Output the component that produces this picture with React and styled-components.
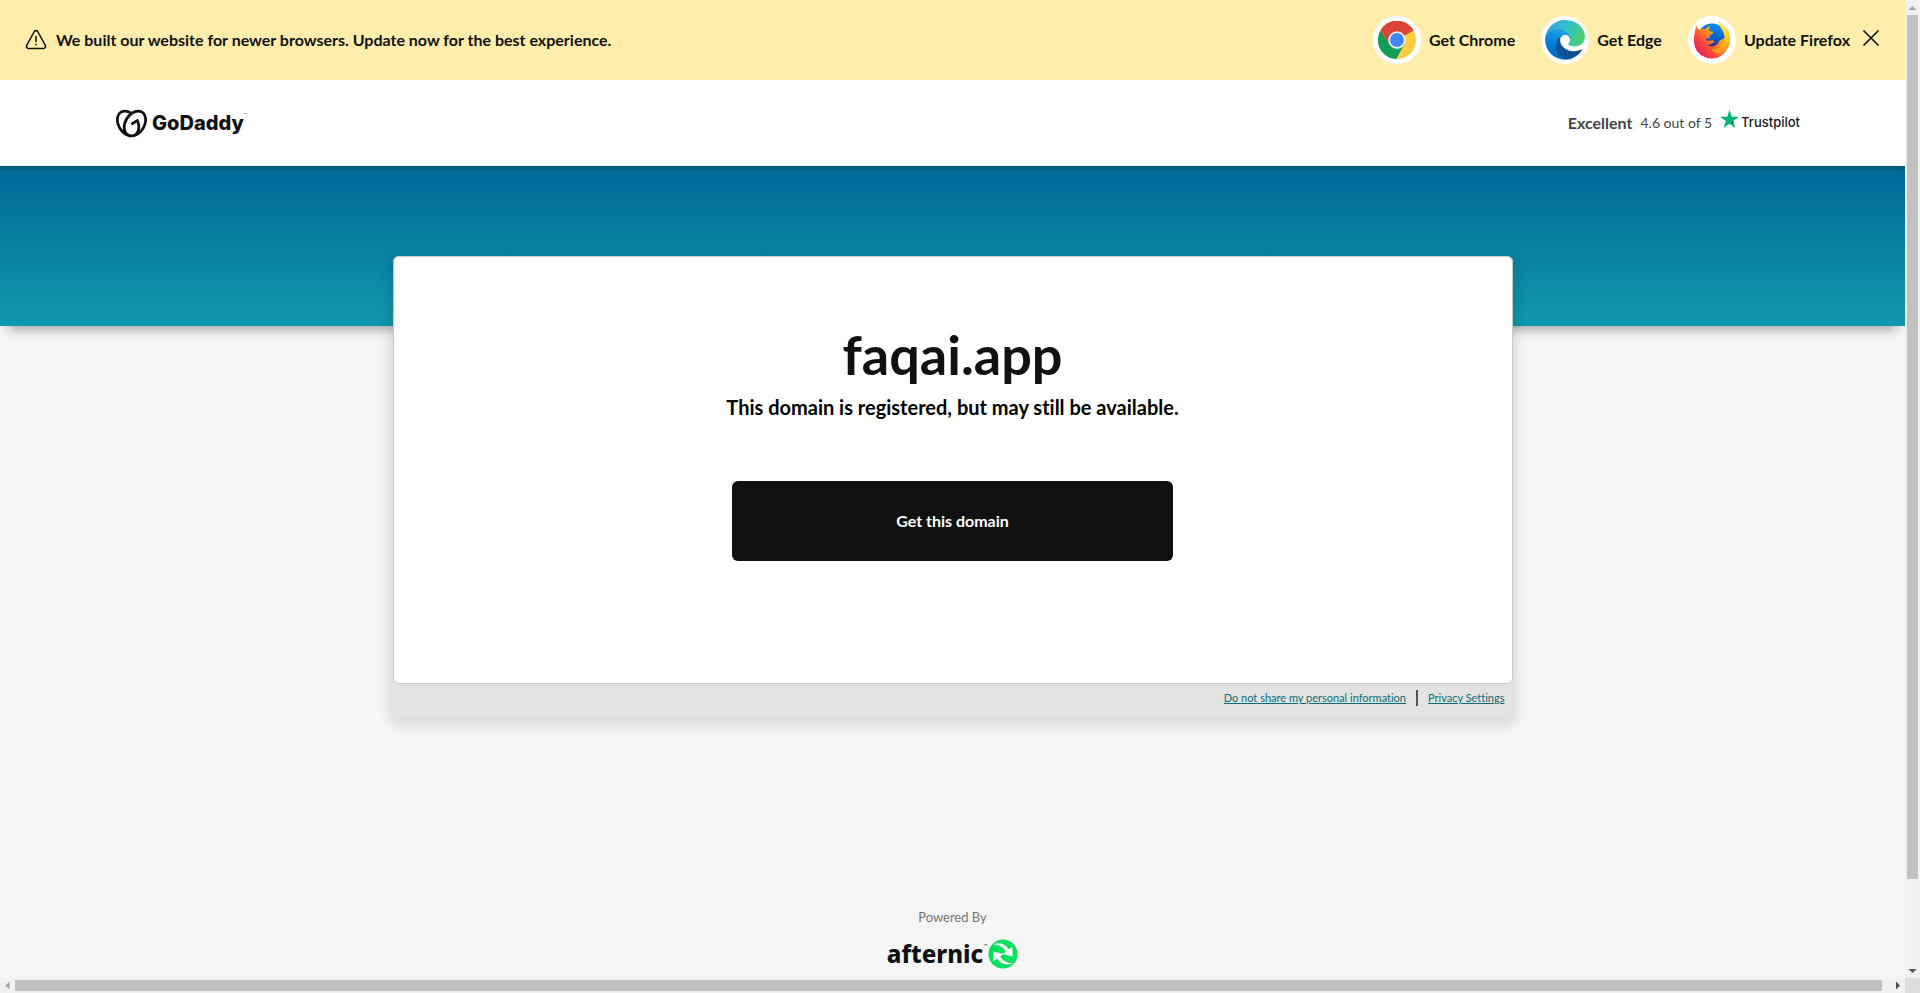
import React, { useState } from 'react';
import styled, { createGlobalStyle } from 'styled-components';
import { SiGodaddy } from 'react-icons/si';

const GlobalStyle = createGlobalStyle`
    * {
        box-sizing: border-box;
    }
    body {
        margin: 0;
        background: #f5f5f5;
        color: #111111;
        font-family: Lato, "Liberation Sans", sans-serif;
        font-size: 16px;
        font-variant-ligatures: none;
        line-height: 24px;
        overflow: hidden;
    }
`;

const Frame = styled.div`
    display: grid;
    grid-template-columns: minmax(0, 1fr) 15px;
    grid-template-rows: minmax(0, 1fr) 15px;
    height: 100vh;
`;

const Page = styled.div`
    display: flex;
    flex-direction: column;
    overflow: hidden;
`;

const Banner = styled.section`
    display: flex;
    flex: none;
    align-items: center;
    justify-content: space-between;
    height: 80px;
    padding: 0 25px 0 24px;
    background: #feedab;
    font-weight: 700;
    font-size: 16px;
`;

const BannerMessage = styled.p`
    display: flex;
    align-items: center;
    gap: 8px;
    margin: 0;
`;

const BrowserList = styled.div`
    display: flex;
    align-items: center;
    gap: 26px;
`;

const BrowserLink = styled.a`
    display: flex;
    align-items: center;
    gap: 8px;
    color: inherit;
    text-decoration: none;
    white-space: nowrap;
`;

const BrowserIcon = styled.span`
    display: flex;
    align-items: center;
    justify-content: center;
    width: 48px;
    height: 48px;
    border-radius: 50%;
    background: #ffffff;
`;

const BannerActions = styled.div`
    display: flex;
    align-items: center;
    gap: 12px;
`;

const CloseButton = styled.button`
    display: flex;
    padding: 0 0 5px;
    border: 0;
    background: none;
    color: inherit;
    cursor: pointer;
`;

const Header = styled.header`
    display: flex;
    flex: none;
    align-items: center;
    justify-content: space-between;
    height: 86px;
    padding: 0 105px 0 116px;
    background: #ffffff;
`;

const Brand = styled.a`
    display: flex;
    align-items: center;
    color: #111111;
    font-family: Inter, sans-serif;
    font-size: 20px;
    font-weight: 800;
    text-decoration: none;
`;

const BrandName = styled.span`
    margin-left: 5px;
`;

const TradeMark = styled.span`
    align-self: flex-start;
    padding-top: 4px;
    font-size: 4px;
    font-weight: 400;
    line-height: 6px;
`;

const Rating = styled.a`
    display: flex;
    align-items: center;
    gap: 8px;
    color: #444444;
    font-size: 14px;
    text-decoration: none;
`;

const RatingWord = styled.strong`
    font-size: 16px;
    font-weight: 700;
`;

const Trustpilot = styled.span`
    display: flex;
    align-items: flex-start;
    gap: 2px;
    padding-bottom: 2px;
    color: #191919;
    font-family: Inter, "Liberation Sans", sans-serif;
    font-size: 13px;
    font-weight: 500;
`;

const Hero = styled.div`
    flex: none;
    height: 160px;
    background:
        linear-gradient(rgba(0, 0, 0, 0.2), rgba(0, 0, 0, 0) 6px),
        linear-gradient(#016899, #1098ad);
    box-shadow: 0 10px 12px -8px rgba(0, 0, 0, 0.4);
`;

const Main = styled.main`
    flex: none;
    position: relative;
    width: 100%;
    max-width: 1120px;
    margin: -70px auto 0;
    border-radius: 6px;
    background: #e3e3e3;
    box-shadow: 0 4px 12px 4px rgba(0, 0, 0, 0.1);
`;

const Card = styled.section`
    display: flex;
    flex-direction: column;
    align-items: center;
    padding: 62px 24px 122px;
    border: 1px solid #c8c8c8;
    border-radius: 6px;
    background: #ffffff;
    text-align: center;
`;

const DomainName = styled.h1`
    margin: 0;
    font-size: 54px;
    font-weight: 700;
    line-height: 72px;
`;

const Availability = styled.h2`
    margin: 0 0 58px;
    color: #000000;
    font-size: 20px;
    font-weight: 700;
    line-height: 32px;
`;

const GetDomain = styled.button`
    width: 100%;
    max-width: 441px;
    height: 80px;
    border: 0;
    border-radius: 6px;
    background: #111111;
    color: #ffffff;
    font: inherit;
    font-size: 16px;
    font-weight: 700;
    cursor: pointer;
`;

const Legal = styled.nav`
    display: flex;
    align-items: center;
    justify-content: flex-end;
    height: 34px;
    padding: 0 8px 6px;
`;

const LegalLink = styled.a`
    color: #0a6c74;
    font-size: 11px;
`;

const Divider = styled.span`
    width: 2px;
    height: 16px;
    margin: 0 10px;
    background: #555555;
`;

const Footer = styled.footer`
    display: flex;
    flex: none;
    flex-direction: column;
    align-items: center;
    gap: 10px;
    margin-top: 187px;
    color: #767676;
    font-size: 13px;
`;

const Afternic = styled.a`
    display: flex;
    align-items: center;
    gap: 1px;
    color: #111111;
    font-family: "Noto Sans", sans-serif;
    font-size: 24px;
    font-weight: 800;
    line-height: 30px;
    text-decoration: none;
`;

const ScrollTrack = styled.div`
    display: flex;
    flex-direction: ${({ $vertical }) => ($vertical ? 'column' : 'row')};
    align-items: center;
    background: #f1f1f1;
`;

const ScrollThumb = styled.div`
    flex: ${({ $size }) => $size};
    ${({ $vertical }) => ($vertical ? 'width' : 'height')}: 11px;
    background: #c1c1c1;
`;

const ScrollRest = styled.div`
    flex: ${({ $size }) => $size};
`;

const ScrollCorner = styled.div`
    background: #dcdcdc;
`;

const WarningIcon = () => (
    <svg width="24" height="24" viewBox="0 0 24 24" fill="none" stroke="currentColor" strokeWidth="1.5" strokeLinecap="round" strokeLinejoin="round">
        <path d="M10.300 3.500 2.700 17.300c-.8 1.400.1 3.200 1.700 3.200h15.200c1.600 0 2.500-1.800 1.700-3.200L13.700 3.500c-.8-1.300-2.600-1.300-3.400 0Z" />
        <path d="M12 8.500v5M12 16.300v.4" />
    </svg>
);

const ChromeLogo = () => (
    <svg width="38" height="38" viewBox="0 0 48 48">
        <circle cx="24" cy="24" r="24" fill="#ffcd40" />
        <path d="M24 24 3.200 12A24 24 0 0 1 44.800 12Z" fill="#db4437" />
        <path d="M24 13H45.300A24 24 0 0 0 3.200 12L14.500 29.500Z" fill="#db4437" />
        <path d="M3.200 12A24 24 0 0 0 23 48L33.500 29.500 24 34 14.500 29.500Z" fill="#0f9d58" />
        <circle cx="24" cy="24" r="11" fill="#f1f1f1" />
        <circle cx="24" cy="24" r="8.800" fill="#4285f4" />
    </svg>
);

const EdgeLogo = () => (
    <svg width="40" height="40" viewBox="4 6 257 257">
        <defs>
            <linearGradient id="edgeDeep" x1="63" y1="178" x2="241" y2="178" gradientUnits="userSpaceOnUse">
                <stop offset="0" stopColor="#0c59a4" />
                <stop offset="1" stopColor="#114a8b" />
            </linearGradient>
            <linearGradient id="edgeBlue" x1="125" y1="85" x2="50" y2="246" gradientUnits="userSpaceOnUse">
                <stop offset="0" stopColor="#1b9de2" />
                <stop offset="0.5" stopColor="#0680d7" />
                <stop offset="1" stopColor="#0067c0" />
            </linearGradient>
            <linearGradient id="edgeGreen" x1="30" y1="80" x2="240" y2="150" gradientUnits="userSpaceOnUse">
                <stop offset="0" stopColor="#35a9d8" />
                <stop offset="0.5" stopColor="#2fc2c8" />
                <stop offset="1" stopColor="#4fd068" />
            </linearGradient>
        </defs>
        <path fill="url(#edgeDeep)" d="M235.700 195.500a93.700 93.700 0 0 1-10.600 4.700 101.900 101.900 0 0 1-35.900 6.400c-47.300 0-88.500-32.500-88.500-74.300a31.500 31.500 0 0 1 16.400-27.300c-42.800 1.800-53.800 46.400-53.800 72.500 0 74 68.100 81.400 82.800 81.400 7.900 0 19.800-2.300 27-4.600l1.300-.4a128.300 128.300 0 0 0 66.600-52.800 4 4 0 0 0-5.300-5.600z" />
        <path fill="url(#edgeBlue)" d="M110.300 246.300A79.200 79.200 0 0 1 87.600 225a80.700 80.700 0 0 1 29.500-120c3.200-1.500 8.500-4.100 15.600-4a32.400 32.400 0 0 1 25.700 13 31.900 31.900 0 0 1 6.300 18.700c0-.2 24.500-79.600-80-79.600-43.900 0-80 41.600-80 78.200a130.200 130.200 0 0 0 12.100 56 128 128 0 0 0 156.400 67 75.500 75.500 0 0 1-62.800-8z" />
        <path fill="url(#edgeGreen)" d="M156.900 153.800c-.8 1-3.400 2.500-3.400 5.600 0 2.600 1.700 5.100 4.700 7.200 14.400 10 41.500 8.700 41.600 8.700a59.600 59.600 0 0 0 30.300-8.300 61.400 61.400 0 0 0 30.400-52.900c.3-22.400-8-37.300-11.300-43.900C228 28.800 182.300 6 132.600 6a128 128 0 0 0-128 126.200c.5-36.500 36.800-66 80-66 3.500 0 23.500.3 42 10 16.300 8.600 24.900 19 30.800 29.200 6.200 10.700 7.300 24.100 7.300 29.500s-2.700 13.300-7.800 19.900z" />
    </svg>
);

const FirefoxLogo = () => (
    <svg width="38" height="38" viewBox="0 0 38 38">
        <defs>
            <linearGradient id="foxBody" x1="34" y1="6" x2="5" y2="33" gradientUnits="userSpaceOnUse">
                <stop offset="0" stopColor="#ffe03a" />
                <stop offset="0.4" stopColor="#ff9a1c" />
                <stop offset="0.7" stopColor="#ff4a38" />
                <stop offset="1" stopColor="#e01c68" />
            </linearGradient>
            <linearGradient id="foxTail" x1="28" y1="0" x2="32" y2="32" gradientUnits="userSpaceOnUse">
                <stop offset="0" stopColor="#fff04a" />
                <stop offset="0.6" stopColor="#ffc225" />
                <stop offset="1" stopColor="#ff8a20" />
            </linearGradient>
            <linearGradient id="foxGlobe" x1="22" y1="2" x2="17" y2="27" gradientUnits="userSpaceOnUse">
                <stop offset="0" stopColor="#0a90ea" />
                <stop offset="0.6" stopColor="#0860cf" />
                <stop offset="1" stopColor="#302080" />
            </linearGradient>
        </defs>
        <circle cx="19" cy="17" r="14.500" fill="url(#foxGlobe)" />
        <path fill="url(#foxBody)" d="M3.500 4.500C4 7 5 8 6.500 8.500c2-.9 4-.8 5.800-.3C13.600 6.600 15.500 5.500 17.500 5.200c-1 1.200-1.600 2.700-1.300 4.600 1 .8 3 .5 4.100 1.200.2 1.700-2.300 2.500-3.500 3.700l-.3 3c-1.800-.5-3.100 0-3.800 1.100 2 1.900 4.300.4 6.700.5 1.600.1 2.400 1.300 1.500 2.200-1.900.2-3 2.500-6.100 2.800 4.500 2.600 10.200.2 11.500-4.500L36 15c2 9-4 22.500-17 22.500C8.500 37.500 1 29.500 1 20c0-6 1-11 2.500-15.500Z" />
        <path fill="url(#foxTail)" d="M26 0c-.4 4.300 1.800 6.500 3.600 9.800 3.700 6.800 1.400 14.200-4.500 17.500-2.600 1.500-5.400 1.300-7.200.8 2 3.400 6 4.900 10.600 4.300C35 29.400 38 23 37 15.500c-.5-4-2-7.500-3.500-10l.5 4C32 5.500 28.500 3.500 26 0Z" />
    </svg>
);

const CloseIcon = () => (
    <svg width="18" height="18" viewBox="0 0 18 18" stroke="currentColor" strokeWidth="1.700" strokeLinecap="round">
        <path d="M2 2l14 14M16 2 2 16" />
    </svg>
);

const StarIcon = () => (
    <svg width="19" height="18" viewBox="0 0 19 18">
        <path fill="#00b67a" d="M9.500 0l2.200 6.800H19l-5.800 4.300 2.200 6.900-5.900-4.300L3.600 18l2.200-6.900L0 6.800h7.300Z" />
        <path fill="#005128" d="m13.700 12.600-.5-1.500-3.700 2.600Z" />
    </svg>
);

const AfternicMark = () => (
    <svg width="30" height="30" viewBox="0 0 30 30">
        <circle cx="15" cy="15" r="14.500" fill="#09e05f" />
        <path fill="#f5f5f5" d="M5 5.500C11.500 2.500 17.500 5 20.700 10.300L24.500 8v9.500L14.500 15l3.300-2.500C15 7.800 10.500 5.500 5 5.500Z" />
        <path fill="#f5f5f5" d="M25.500 24C19 27 12.500 25 9.300 19.700L5.500 22V12.500l10 2.500-3.300 2.500C15 22 19.500 24.500 25.500 24Z" />
    </svg>
);

const ARROWS = {
    up: 'M3.500 10h8l-4-4Z',
    down: 'M3.500 6h8l-4 4Z',
    left: 'M9.500 3.500v8l-4-4Z',
    right: 'M6 3.500v8l4-4Z',
};

const ScrollArrow = ({ direction, color }) => (
    <svg width="15" height="15" viewBox="0 0 15 15">
        <path d={ARROWS[direction]} fill={color} />
    </svg>
);

const BROWSERS = [
    { label: 'Get Chrome', href: '#chrome', Logo: ChromeLogo },
    { label: 'Get Edge', href: '#edge', Logo: EdgeLogo },
    { label: 'Update Firefox', href: '#firefox', Logo: FirefoxLogo },
];

const BrowserBanner = ({ onClose }) => (
    <Banner>
        <BannerMessage>
            <WarningIcon />
            We built our website for newer browsers. Update now for the best experience.
        </BannerMessage>
        <BannerActions>
            <BrowserList>
                {BROWSERS.map(({ label, href, Logo }) => (
                    <BrowserLink href={href} key={label}>
                        <BrowserIcon><Logo /></BrowserIcon>
                        {label}
                    </BrowserLink>
                ))}
            </BrowserList>
            <CloseButton type="button" aria-label="Close" onClick={onClose}>
                <CloseIcon />
            </CloseButton>
        </BannerActions>
    </Banner>
);

const App = () => {
    const [bannerOpen, setBannerOpen] = useState(true);

    return (
        <Frame>
            <GlobalStyle />
            <Page>
                {bannerOpen && <BrowserBanner onClose={() => setBannerOpen(false)} />}
                <Header>
                    <Brand href="#home">
                        <SiGodaddy size={31} />
                        <BrandName>GoDaddy</BrandName>
                        <TradeMark>™</TradeMark>
                    </Brand>
                    <Rating href="#reviews">
                        <RatingWord>Excellent</RatingWord>
                        <span>4.6 out of 5</span>
                        <Trustpilot><StarIcon />Trustpilot</Trustpilot>
                    </Rating>
                </Header>
                <Hero />
                <Main>
                    <Card>
                        <DomainName>faqai.app</DomainName>
                        <Availability>This domain is registered, but may still be available.</Availability>
                        <GetDomain type="button">Get this domain</GetDomain>
                    </Card>
                    <Legal>
                        <LegalLink href="#do-not-share">Do not share my personal information</LegalLink>
                        <Divider />
                        <LegalLink href="#privacy">Privacy Settings</LegalLink>
                    </Legal>
                </Main>
                <Footer>
                    <span>Powered By</span>
                    <Afternic href="#afternic">
                        <span>afternic</span>
                        <TradeMark>™</TradeMark>
                        <AfternicMark />
                    </Afternic>
                </Footer>
            </Page>
            <ScrollTrack $vertical>
                <ScrollArrow direction="up" color="#a3a3a3" />
                <ScrollThumb $vertical $size={864} />
                <ScrollRest $size={84} />
                <ScrollArrow direction="down" color="#505050" />
            </ScrollTrack>
            <ScrollTrack>
                <ScrollArrow direction="left" color="#a3a3a3" />
                <ScrollThumb $size={1867} />
                <ScrollRest $size={8} />
                <ScrollArrow direction="right" color="#505050" />
            </ScrollTrack>
            <ScrollCorner />
        </Frame>
    );
};

export default App;
